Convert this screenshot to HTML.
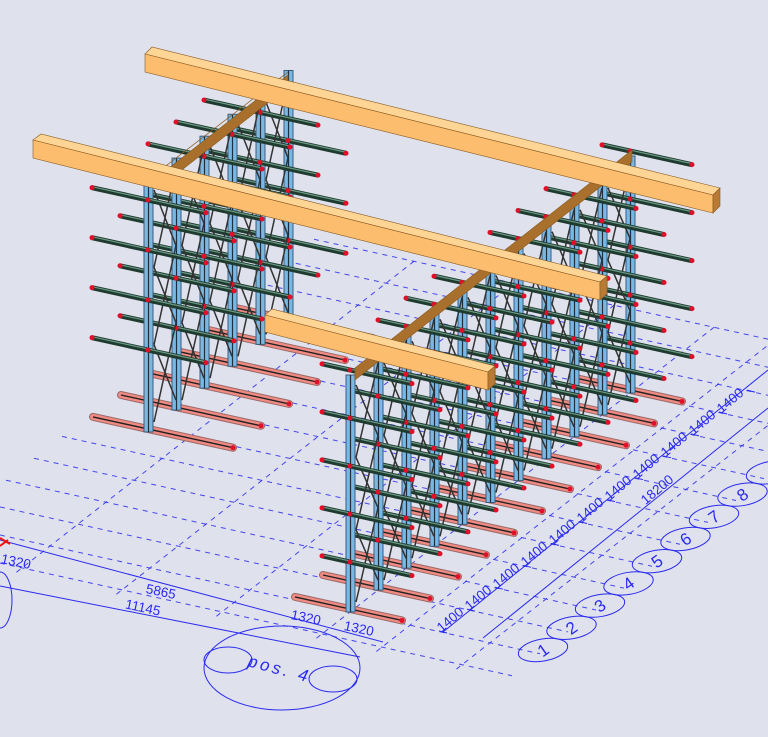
<!DOCTYPE html>
<html><head><meta charset="utf-8"><style>
html,body{margin:0;padding:0;background:#dfe1ec;width:768px;height:737px;overflow:hidden;}
svg{display:block;font-family:"Liberation Sans",sans-serif;}
</style></head><body>
<svg id="s" width="768" height="737" viewBox="0 0 768 737" xmlns="http://www.w3.org/2000/svg">
<rect width="768" height="737" fill="#dfe1ec"/>
<g id="dims" fill="none" stroke="#2a2af0" stroke-width="1"></g>
<g id="racks"></g>
<g id="beams"></g>
</svg>
<script>
const NS="http://www.w3.org/2000/svg";
function el(parent,tag,attrs,text){const e=document.createElementNS(NS,tag);for(const k in attrs)e.setAttribute(k,attrs[k]);if(text!==undefined)e.textContent=text;document.getElementById(parent).appendChild(e);return e;}
const S=0.22, VX=28, VY=-21.9;
for(let i=-1;i<=13;i++){
  const bx=350+i*VX, by=612+i*VY;
  const x0=Math.max(0,bx-400), y0=by+(x0-bx)*S, x1=Math.min(768,bx+190), y1=by+(x1-bx)*S;
  el('dims','line',{x1:x0,y1:y0,x2:x1,y2:y1,'stroke-dasharray':'5 5',opacity:0.85});
}
[-300,-200,-100,0,60,140].forEach(du=>{
  const bx=350+du, by=612+du*S;
  const t0=-1.2,t1=13;
  el('dims','line',{x1:bx+t0*VX,y1:by+t0*VY,x2:bx+t1*VX,y2:by+t1*VY,'stroke-dasharray':'5 5',opacity:0.85});
});
el('dims','line',{x1:0,y1:540,x2:383,y2:642});
el('dims','line',{x1:0,y1:586,x2:360,y2:657});
el('dims','line',{x1:443,y1:632,x2:768,y2:370});
el('dims','line',{x1:483,y1:638,x2:768,y2:408});
for(let i=0;i<12;i++){const x=443+i*VX,y=632+i*VY;el('dims','line',{x1:x-4,y1:y-1,x2:x+4,y2:y+1});}
for(let i=0;i<10;i++){
  const cx=543+i*28.5, cy=650-i*22.2;
  el('dims','ellipse',{cx:cx,cy:cy,rx:25,ry:11,transform:`rotate(-10 ${cx} ${cy})`});
  if(i<8) el('dims','text',{x:cx,y:cy+6,'font-size':17,fill:'#2a2af0',stroke:'none','text-anchor':'middle',transform:`rotate(-35 ${cx} ${cy})`},String(i+1));
}
el('dims','ellipse',{cx:282,cy:668,rx:78,ry:42});
el('dims','ellipse',{cx:228,cy:660,rx:24,ry:13});
el('dims','ellipse',{cx:333,cy:679,rx:24,ry:13});
el('dims','ellipse',{cx:0,cy:600,rx:12,ry:28});
el('dims','text',{x:247,y:666,'font-size':17,'font-style':'italic',fill:'#2a2af0',stroke:'none',transform:'rotate(15 247 666)','letter-spacing':'3'},'pos. 4');
function lab(x,y,t,r){el('dims','text',{x:x,y:y,'font-size':13.5,fill:'#2a2af0',stroke:'none','text-anchor':'middle',transform:`rotate(${r} ${x} ${y})`},t);}
lab(15,566,'1320',12);lab(160,596,'5865',12);lab(142,612,'11145',12);lab(305,622,'1320',12);lab(358,633,'1320',12);
for(let i=0;i<11;i++){lab(453+i*VX,623+i*VY,'1400',-40);}
lab(660,493,'18200',-40);
el('dims','path',{d:'M0 538 L10 544 M0 546 L8 540',stroke:'#f01010','stroke-width':2});

function rack(bx,by,n,h,armsZ,aL,aR,bL,bR){
  for(let i=n-1;i>=0;i--){
    const x=bx+i*VX, y=by+i*VY;
    const bp=`M${x+bL} ${y+bL*S-3} L${x+bR} ${y+bR*S-3}`;
    el('racks','path',{d:bp,stroke:'#9a6a68','stroke-width':8,'stroke-linecap':'round'});
    el('racks','path',{d:bp,stroke:'#f08a82','stroke-width':6,'stroke-linecap':'round'});
    el('racks','path',{d:bp,stroke:'#222','stroke-width':1.4});
    el('racks','circle',{cx:x+bR,cy:y+bR*S-3,r:2.5,fill:'#e0102a'});
    if(i<n-1){
      const nx=x+VX, ny=y+VY;
      for(let k=0;k<3;k++){
        const z0=10+k*(h-20)/3, z1=10+(k+1)*(h-20)/3;
        el('racks','path',{d:`M${x+6} ${y-z0} L${nx} ${ny-z1} M${x+6} ${y-z1} L${nx} ${ny-z0}`,stroke:'#333','stroke-width':1.5,fill:'none'});
      }
    }
    el('racks','rect',{x:x-4,y:y-h,width:9,height:h,fill:'#7ab8e4',stroke:'#3c5c7c','stroke-width':1});
    el('racks','line',{x1:x+0.5,y1:y-h,x2:x+0.5,y2:y,stroke:'#1e3040','stroke-width':1.2});
    armsZ.forEach(z=>{
      const yy=y-z;
      el('racks','path',{d:`M${x+aL} ${yy+aL*S} L${x+aR} ${yy+aR*S}`,stroke:'#1f3a2e','stroke-width':5});
      el('racks','path',{d:`M${x+aL} ${yy+aL*S-1} L${x+aR} ${yy+aR*S-1}`,stroke:'#6a9a86','stroke-width':1.2});
      el('racks','circle',{cx:x+aL,cy:yy+aL*S,r:2.5,fill:'#e0102a'});
      el('racks','circle',{cx:x+aR,cy:yy+aR*S,r:2.5,fill:'#e0102a'});
      el('racks','circle',{cx:x,cy:yy,r:2.5,fill:'#e0102a'});
    });
  }
}
rack(148,432,6,252,[232,182,132,82],-56,58,-55,85);
rack(350,612,11,237,[242,194,146,98,50],-28,62,-55,52);

function poly(p,f){el('beams','polygon',{points:p,fill:f,stroke:'#8a5a20','stroke-width':0.6});}
poly('160,175 288,75 288,87 160,187','#a8702c');
poly('355,368 632,150 632,162 355,380','#a8702c');
poly('150,178 158,172 288,72 280,78','#c89050');
poly('145,54 152,47 720,188 713,195','#ffd596');
poly('145,54 713,195 713,213 145,72','#fdbd6e');
poly('713,195 720,188 720,206 713,213','#b87a35');
poly('33,140 41,134 607,276 600,282','#ffd596');
poly('33,140 600,282 600,300 33,158','#fdbd6e');
poly('600,282 607,276 607,294 600,300','#b87a35');
poly('265,315 272,309 495,366 488,372','#ffd596');
poly('265,315 488,372 488,390 265,332','#fdbd6e');
poly('488,372 495,366 495,384 488,390','#b87a35');
</script>
</body></html>
